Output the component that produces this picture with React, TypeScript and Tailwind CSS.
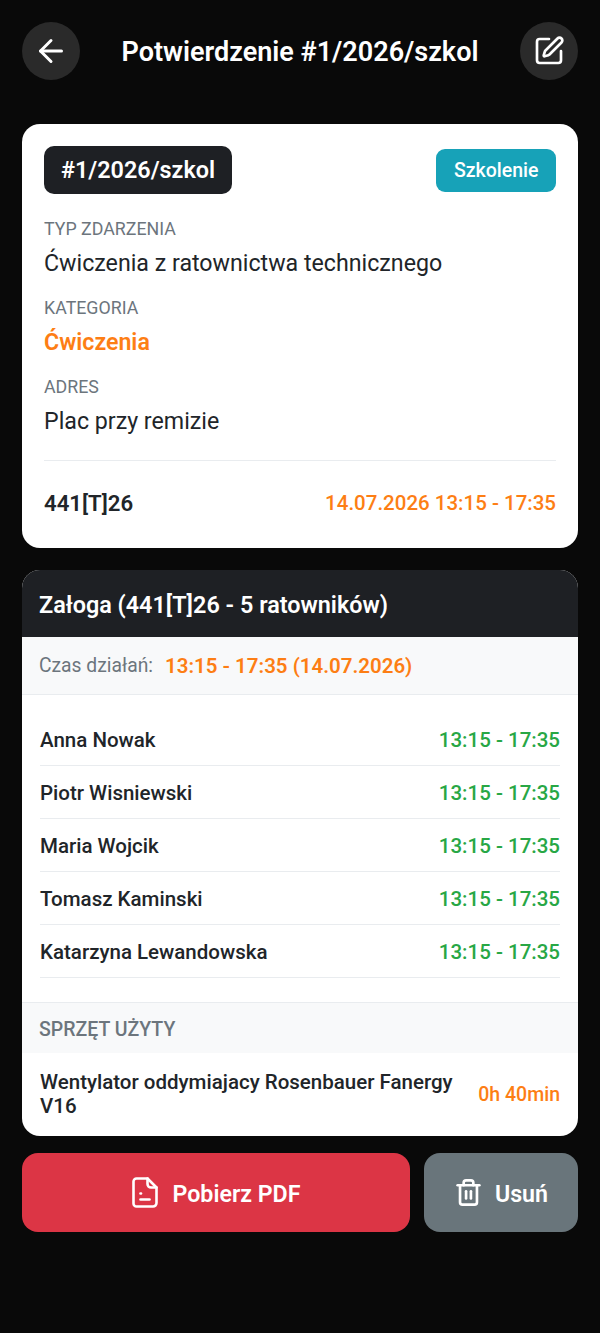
import React from 'react';
import { ArrowLeft, SquarePen, Trash2 } from 'lucide-react';

const crew = ['Anna Nowak', 'Piotr Wisniewski', 'Maria Wojcik', 'Tomasz Kaminski', 'Katarzyna Lewandowska'];

const FileIcon = () => (
  <svg width="26" height="31" viewBox="0 0 26 31" fill="none" stroke="currentColor" strokeWidth="2.6" strokeLinecap="round" strokeLinejoin="round">
    <path d="M4.5 1.5h11l9 9v15.5a3.5 3.5 0 0 1-3.5 3.5H4.500a3 3 0 0 1-3-3V4.500a3 3 0 0 1 3-3z" />
    <path d="M15.5 1.500v5.500a3.500 3.500 0 0 0 3.500 3.500h5.500" />
    <path d="M8.500 16.500h.5" />
    <path d="M8.500 22.500h9" />
  </svg>
);

export default function App() {
  return (
    <div className="min-h-[1333px] bg-[#090909] px-[22px] pt-[22px] font-['Roboto',sans-serif]">
      {/* Top bar */}
      <header className="flex items-center justify-between">
        <button className="flex h-[58px] w-[58px] items-center justify-center rounded-full bg-[#2a2a2a] text-white">
          <ArrowLeft size={36} strokeWidth={2} />
        </button>
        <h1 className="pt-[1px] text-[27px] font-semibold leading-[34px] text-white">Potwierdzenie #1/2026/szkol</h1>
        <button className="flex h-[58px] w-[58px] items-center justify-center rounded-full bg-[#2a2a2a] text-white">
          <SquarePen size={32} strokeWidth={2} />
        </button>
      </header>

      {/* Event card */}
      <section className="mt-[44px] h-[424px] rounded-[18px] bg-white px-[22px] pt-[22px]">
        <div className="flex items-center justify-between">
          <span className="flex h-[48px] items-center rounded-[10px] bg-[#1e2024] px-[17px] pt-[2px] text-[23.400px] font-semibold text-white">#1/2026/szkol</span>
          <span className="flex h-[43px] items-center rounded-[9px] bg-[#17a2b8] px-[17.500px] pt-[2px] text-[19.500px] font-medium text-white">Szkolenie</span>
        </div>

        <p className="mt-[21px] text-[17.800px] leading-[28px] text-[#6c757d]">TYP ZDARZENIA</p>
        <p className="mt-[2px] text-[23.200px] leading-[36px] text-[#212529]">Ćwiczenia z ratownictwa technicznego</p>

        <p className="mt-[13px] text-[17.800px] leading-[28px] text-[#6c757d]">KATEGORIA</p>
        <p className="mt-[2px] text-[23.200px] font-semibold leading-[36px] text-[#fd7e14]">Ćwiczenia</p>

        <p className="mt-[13px] text-[17.800px] leading-[28px] text-[#6c757d]">ADRES</p>
        <p className="mt-[2px] text-[23.200px] leading-[36px] text-[#212529]">Plac przy remizie</p>

        <div className="mt-[21px] flex items-center justify-between border-t border-[#e9ecef] pt-[25px]">
          <span className="text-[22.200px] font-semibold leading-[34px] text-[#212529]">441[T]26</span>
          <span className="text-[20.500px] font-medium leading-[34px] text-[#fd7e14]">14.07.2026 13:15 - 17:35</span>
        </div>
      </section>

      {/* Crew card */}
      <section className="mt-[22px] overflow-hidden rounded-[18px] bg-white">
        <div className="flex h-[67px] items-center bg-[#1e2024] px-[17px] pt-[4px]">
          <h2 className="text-[23.400px] font-semibold text-white">Załoga (441[T]26 - 5 ratowników)</h2>
        </div>
        <div className="flex h-[58px] items-center gap-[12px] border-b border-[#e9ecef] bg-[#f8f9fa] px-[17px] pt-[2px]">
          <span className="text-[19.300px] text-[#6c757d]">Czas działań:</span>
          <span className="text-[20.500px] font-semibold text-[#fd7e14]">13:15 - 17:35 (14.07.2026)</span>
        </div>

        <ul className="px-[18px] pb-[24px] pt-[18px]">
          {crew.map(name => (
            <li key={name} className="flex h-[53px] items-center justify-between border-b border-[#e9ecef] pt-[2px]">
              <span className="text-[20.500px] font-medium text-[#212529]">{name}</span>
              <span className="text-[20.500px] font-medium text-[#28a745]">13:15 - 17:35</span>
            </li>
          ))}
        </ul>

        <div className="flex h-[51px] items-center border-t border-[#e9ecef] bg-[#f8f9fa] px-[17px] pt-[4px]">
          <span className="text-[19.500px] font-medium text-[#6c757d]">SPRZĘT UŻYTY</span>
        </div>
        <div className="flex h-[83px] items-center justify-between px-[18px]">
          <p className="w-[425px] pb-[2px] text-[20.500px] font-medium leading-[24px] text-[#212529]">Wentylator oddymiajacy Rosenbauer Fanergy V16</p>
          <span className="text-[19.500px] font-medium text-[#fd7e14]">0h 40min</span>
        </div>
      </section>

      {/* Actions */}
      <div className="mt-[17px] flex gap-[14px]">
        <button className="flex h-[79px] flex-1 items-center justify-center gap-[15px] rounded-[16px] bg-[#dc3545] text-[23.200px] font-semibold text-white">
          <FileIcon />
          <span className="pt-[3px]">Pobierz PDF</span>
        </button>
        <button className="flex h-[79px] w-[154px] items-center justify-center gap-[12px] rounded-[16px] bg-[#69757b] text-[23.200px] font-semibold text-white">
          <Trash2 size={29} strokeWidth={2.2} />
          <span className="pt-[3px]">Usuń</span>
        </button>
      </div>
    </div>
  );
}
